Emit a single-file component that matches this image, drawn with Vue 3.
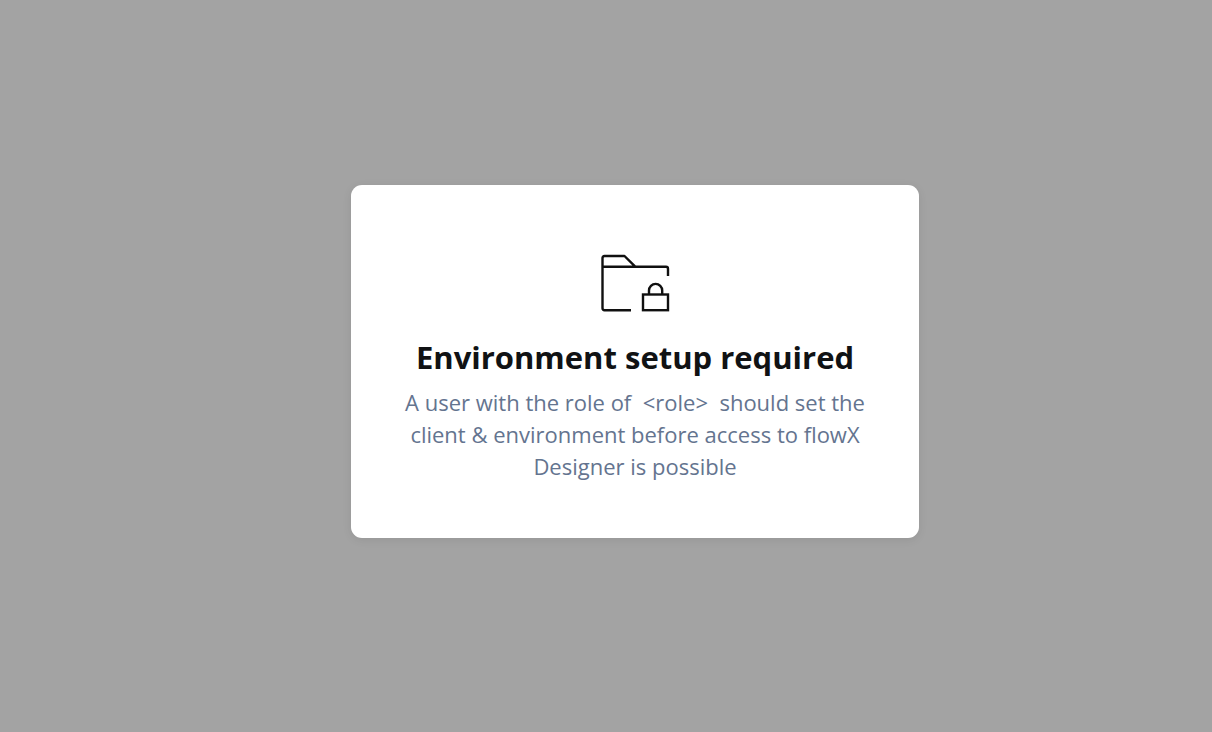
<script setup>
const role = '<role>'
</script>

<template>
  <main class="overlay">
    <section class="card" role="dialog" aria-labelledby="title" aria-describedby="message">
      <svg class="icon" viewBox="0 0 70 58" fill="none" stroke="#101010" stroke-width="2.4" stroke-linejoin="round" aria-hidden="true">
        <path d="M31 56.200H4.500Q2.500 56.200 2.500 54.200V4Q2.500 2 4.500 2H24.500L35.500 12.800H66Q68 12.800 68 14.800V22M2.500 12.800H35.500" />
        <rect x="43" y="40.500" width="25" height="15.700" stroke-linejoin="miter" />
        <path d="M49 40.500V36.500A6.600 6.600 0 0 1 62.200 36.500V40.500" />
      </svg>
      <h1 id="title" class="title">Environment setup required</h1>
      <p id="message" class="message">A user with the role of&nbsp; {{ role }}&nbsp; should set the client &amp; environment before access to flowX Designer is possible</p>
    </section>
  </main>
</template>

<style>
body {
  margin: 0;
  background: #a3a3a3;
}
</style>

<style scoped>
.overlay {
  box-sizing: border-box;
  min-height: 100vh;
  padding: 0 0 9px 58px;
  display: flex;
  align-items: center;
  justify-content: center;
  font-family: "Open Sans", sans-serif;
}
.card {
  box-sizing: border-box;
  width: 100%;
  max-width: 568px;
  padding: 69px 52px 56px;
  display: flex;
  flex-direction: column;
  align-items: center;
  background: #fff;
  border-radius: 11px;
  box-shadow: 0 2px 10px rgba(0, 0, 0, 0.08);
  text-align: center;
}
.icon {
  width: 70px;
  height: 58px;
}
.title {
  margin: 24px 0 8px;
  color: #101214;
  font-size: 31px;
  line-height: 42px;
  font-weight: 700;
}
.message {
  margin: 0;
  color: #64748f;
  font-size: 22px;
  line-height: 32px;
  font-weight: 400;
}
</style>
